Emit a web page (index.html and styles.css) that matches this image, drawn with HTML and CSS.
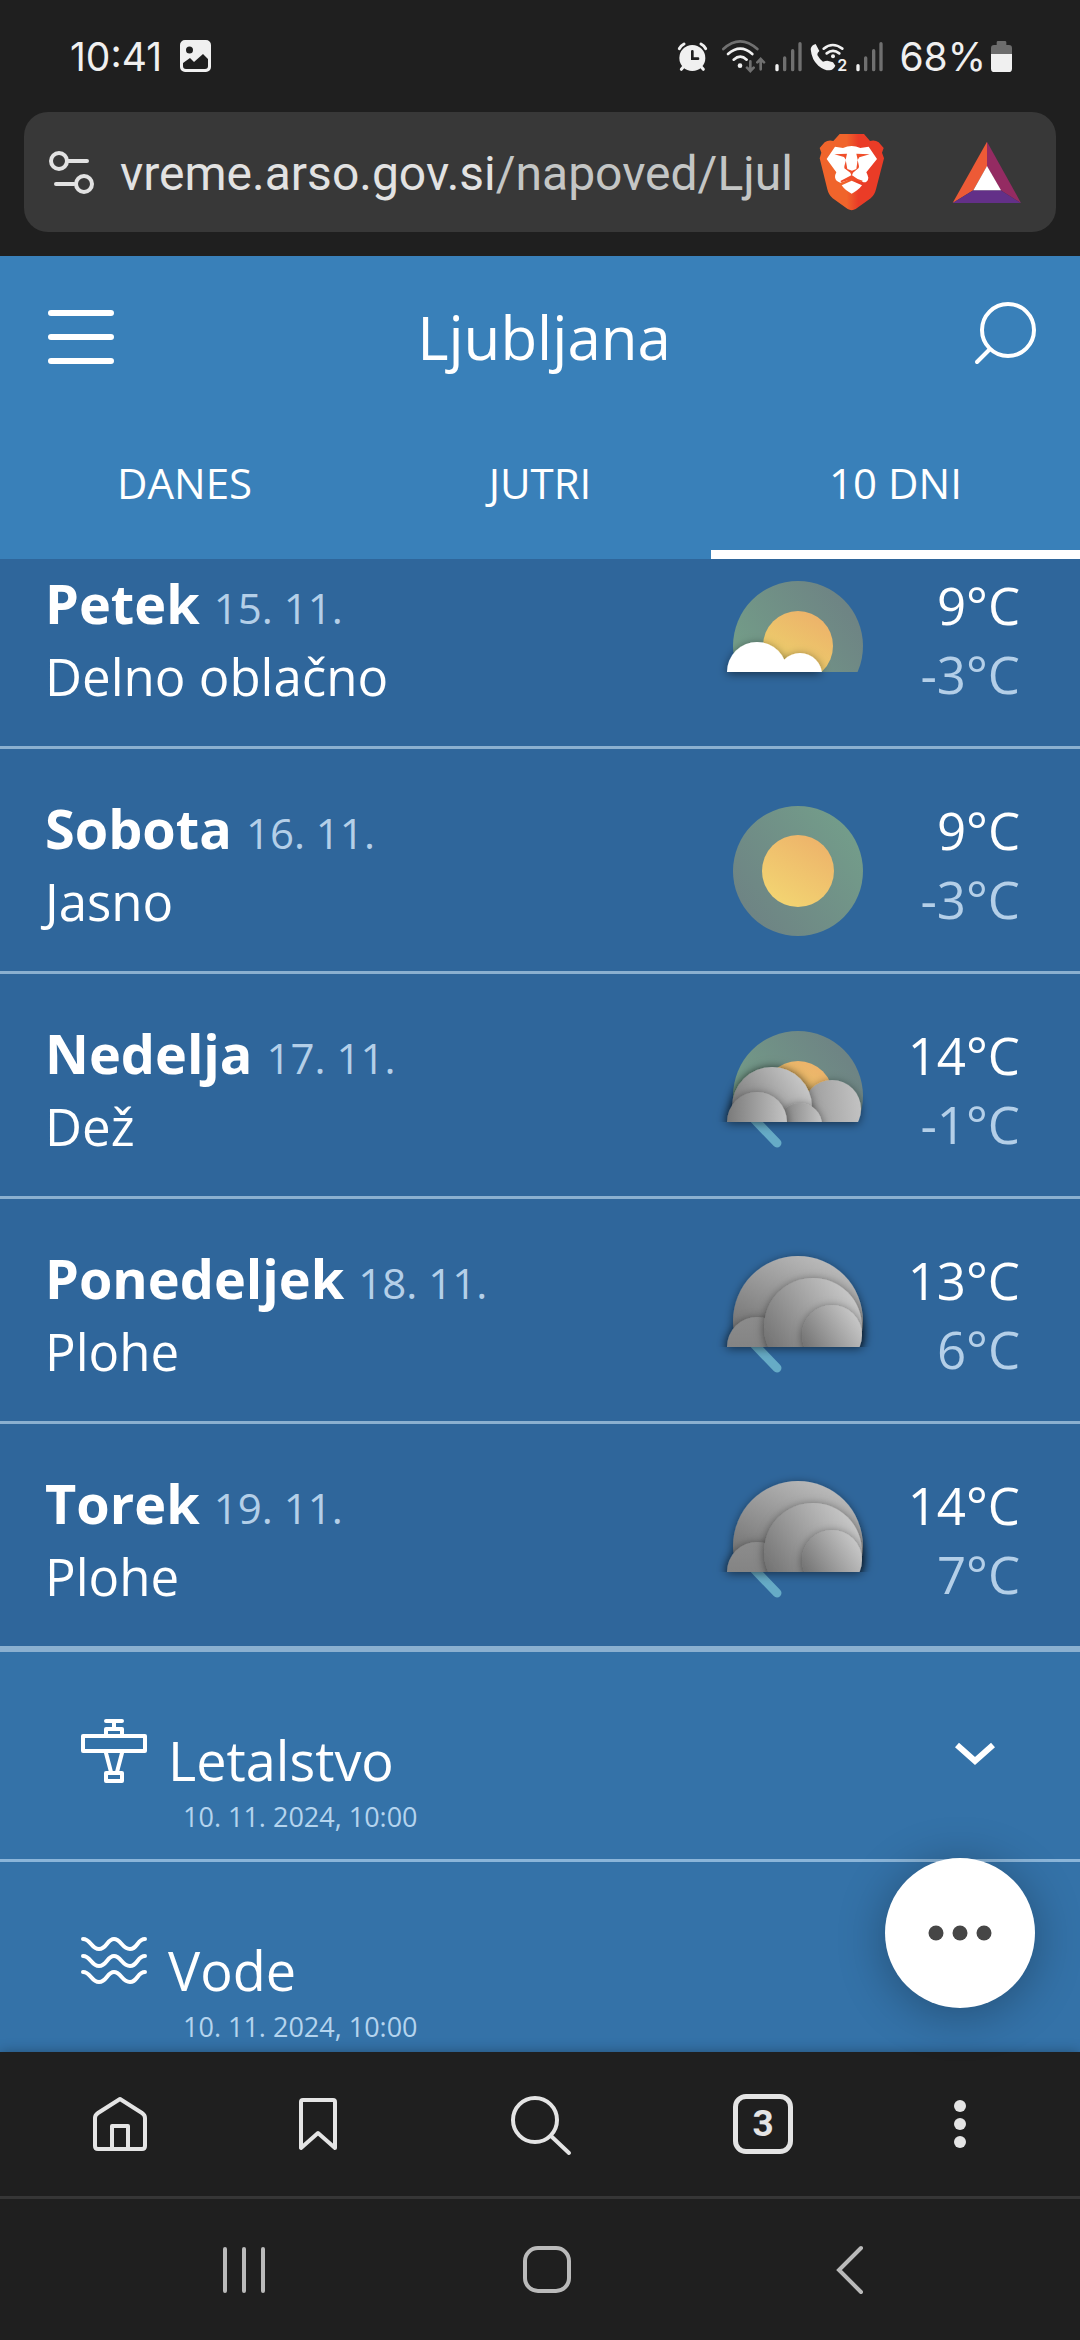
FILE: index.html
```html
<!DOCTYPE html>
<html lang="sl">
<head>
<meta charset="utf-8">
<meta name="viewport" content="width=device-width">
<title>Ljubljana</title>
<link rel="stylesheet" href="styles.css">
</head>
<body>
<svg class="defs" aria-hidden="true">
  <defs>
    <linearGradient id="sun" x1="0.2" y1="1" x2="0.8" y2="0"><stop offset="0" stop-color="#f3d672"/><stop offset="1" stop-color="#edb26a"/></linearGradient>
    <linearGradient id="sunLow" x1="0.3" y1="0.7" x2="0.7" y2="0"><stop offset="0" stop-color="#eccd6b"/><stop offset="1" stop-color="#edb26a"/></linearGradient>
    <linearGradient id="halo" x1="0.1" y1="0.8" x2="0.9" y2="0.2"><stop offset="0" stop-color="#6e8484"/><stop offset="1" stop-color="#739c8a"/></linearGradient>
    <linearGradient id="haloLow" x1="0.1" y1="0.6" x2="0.8" y2="0.1"><stop offset="0" stop-color="#739c88"/><stop offset="1" stop-color="#6e8484"/></linearGradient>
    <linearGradient id="cloud" x1="0" y1="0.8" x2="0.9" y2="0.2"><stop offset="0" stop-color="#6c6c6c"/><stop offset="1" stop-color="#c6c6c6"/></linearGradient>
    <linearGradient id="cloudBack" x1="0.2" y1="0.8" x2="0.6" y2="0"><stop offset="0" stop-color="#686868"/><stop offset="1" stop-color="#b8b8b8"/></linearGradient>
    <linearGradient id="cloudSide" x1="0" y1="0.6" x2="1" y2="0.5"><stop offset="0" stop-color="#989898"/><stop offset="1" stop-color="#c2c2c2"/></linearGradient>
    <linearGradient id="cloudFront" x1="0" y1="0" x2="1" y2="0"><stop offset="0" stop-color="#7a7a7a"/><stop offset="1" stop-color="#c4c4c4"/></linearGradient>
    <linearGradient id="cloudDark" x1="0" y1="0" x2="0" y2="1"><stop offset="0" stop-color="#8c8c8c"/><stop offset="1" stop-color="#7c7c7c"/></linearGradient>
    <linearGradient id="brave" x1="0" y1="0" x2="1" y2="0"><stop offset="0.42" stop-color="#f0642b"/><stop offset="0.6" stop-color="#ea3c27"/></linearGradient>
    <clipPath id="sky"><rect x="-20" y="-20" width="190" height="121"/></clipPath>
    <filter id="shade" x="-30%" y="-30%" width="160%" height="160%"><feDropShadow dx="0" dy="2" stdDeviation="5" flood-color="#000" flood-opacity="0.5"/></filter>
    <symbol id="heavy" viewBox="0 0 152 150" overflow="visible">
      <path d="M33 97 57 122" stroke="#66abc6" stroke-width="9" stroke-linecap="round"/>
      <g filter="url(#shade)"><g clip-path="url(#sky)">
        <circle cx="78" cy="75" r="65" fill="url(#cloudBack)"/>
        <g filter="url(#shade)"><circle cx="37" cy="101" r="30" fill="url(#cloudDark)"/></g>
        <g filter="url(#shade)"><circle cx="93" cy="81" r="49" fill="url(#cloud)"/></g>
        <g filter="url(#shade)"><circle cx="112" cy="89" r="30" fill="url(#cloud)"/></g>
      </g></g>
    </symbol>
  </defs>
</svg>

<div class="statusbar">
  <div class="status-left">
    <span class="clock">10:41</span>
    <svg width="31" height="32" viewBox="0 0 31 32"><path fill="#f0f0f0" fill-rule="evenodd" d="M5 0h21a5 5 0 0 1 5 5v22a5 5 0 0 1-5 5H5a5 5 0 0 1-5-5V5a5 5 0 0 1 5-5ZM9.500 6.500a3.500 3.500 0 1 0 0 7a3.500 3.500 0 0 0 0-7ZM3 23v3q0 3 3 3h19q3 0 3-3v-7l-5-5-9 8-4-4Z"/></svg>
  </div>
  <div class="status-right">
    <svg width="37" height="35" viewBox="108 117 111 105" fill="#f0f0f0"><circle cx="157" cy="174" r="39"/><path d="M118 146q4-9 14-14M197 146q-4-9-14-14M124 208l12-14M190 208l-12-14" stroke="#f0f0f0" stroke-width="9" stroke-linecap="round" fill="none"/><path d="M157 154v22h17" fill="none" stroke="#1f1f1f" stroke-width="8" stroke-linecap="round"/></svg>
    <svg width="47" height="35" viewBox="240 117 141 105" fill="none" stroke-width="8" stroke-linecap="round"><path d="M250 147q50-46 102 0M331 184v28M321 203l10 10 10-10M362 208v-28M352 187l10-10 10 10" stroke="#707070"/><path d="M264 162q37-32 73 0M281 179q20-18 39 0" stroke="#f0f0f0"/><circle cx="300" cy="197" r="7" fill="#f0f0f0"/></svg>
    <svg width="29" height="35" viewBox="402 117 87 105" fill="none" stroke-width="10" stroke-linecap="round"><path d="M411 197v12" stroke="#f0f0f0"/><path d="M434 174v35M458 152v57M480 131v78" stroke="#707070"/></svg>
    <svg width="38" height="35" viewBox="513 117 114 105"><path fill="#f0f0f0" d="M515 147q2-12 15-15l11 21q-7 6-6 12 7 13 17 20 8-3 13-3l17 5 7 10q-5 12-18 14-16 0-33-14-20-17-23-50Z"/><path d="M554 146q27-22 56 0M563 160q19-15 38 0" fill="none" stroke="#f0f0f0" stroke-width="8" stroke-linecap="round"/><circle cx="582" cy="169" r="6" fill="#f0f0f0"/><text x="595" y="212" class="sim">2</text></svg>
    <svg width="29" height="35" viewBox="402 117 87 105" fill="none" stroke-width="10" stroke-linecap="round"><path d="M411 197v12" stroke="#f0f0f0"/><path d="M434 174v35M458 152v57M480 131v78" stroke="#707070"/></svg>
    <div class="battery"><span>68%</span>
    <svg width="23" height="35" viewBox="1047 117 69 105"><path fill="#6c6c6c" d="M1050 164v-20q0-9 9-9h8v-8q0-4 4-4h21q4 0 4 4v8h8q9 0 9 9v20Z"/><path fill="#f0f0f0" d="M1050 162h63v44q0 10-10 10h-43q-10 0-10-10Z"/></svg></div>
  </div>
</div>

<div class="urlbar">
  <button class="plain" aria-label="Site settings"><svg width="48" height="44" viewBox="0 0 48 44" fill="none" stroke="#e2e2e2" stroke-width="4" stroke-linecap="round"><circle cx="11" cy="11" r="8"/><path d="M20 11h19M8 34h18"/><circle cx="36" cy="34" r="8"/></svg></button>
  <button class="plain url"><span class="host">vreme.arso.gov.si</span>/napoved/Ljul</button>
  <button class="plain shield" aria-label="Brave Shields"><svg width="66" height="78" viewBox="534 399 198 234"><path fill="url(#brave)" d="M596 402h73l18 21q15-4 26 4l15 17-5 14 6 17-24 93q-4 17-16 27l-45 32q-12 7-24 0l-45-32q-12-10-16-27l-23-93 5-17-5-14 15-17q11-8 26-4Z"/><path fill="#fff" d="M582 440l24 4q26-12 52 0l25-4 25 37-32 40q4 8 6 16-1 14-14 14-18-4-33-18-14 14-37 19-14-3-16-16 0-8 4-15l-29-40Z"/><path fill="#f04e2a" d="M580 463l38-2-4 18 5 28 14 5 13-5 4-28-4-18 40 2-31 9-5 8 4 19-1 5-17 14-3 8q14 12 32 16l-2 5-31-10-31 10-3-4 33-17-3-8-18-13v-6l5-19-6-9Z"/><path fill="#fff" d="M602 556l30-14 31 14q-10 14-31 25-20-10-30-25Z"/></svg></button>
  <button class="plain" aria-label="Brave Rewards"><svg width="70" height="63" viewBox="933 420 210 189"><path fill="#ed5a36" d="M1038 422v74l-41 72-62 38Z"/><path fill="#942b62" d="M1038 422l102 184-61-38-41-72Z"/><path fill="#633088" d="M935 606l62-38h82l61 38Z"/><path fill="#fff" d="M1038 495l42 73h-83Z"/></svg></button>
</div>

<header class="header">
  <div class="topbar">
    <button class="plain" aria-label="Meni"><svg width="68" height="54" viewBox="0 0 68 54" stroke="#fff" stroke-width="6" stroke-linecap="round"><path d="M4 3h60M4 27h60M4 51h60"/></svg></button>
    <h1 class="title">Ljubljana</h1>
    <button class="plain search" aria-label="Iskanje"><svg width="64" height="64" viewBox="0 0 64 64" fill="none" stroke="#fff" stroke-width="4" stroke-linecap="round"><circle cx="35" cy="28" r="26"/><path d="M16 48 4 60"/></svg></button>
  </div>
  <nav class="tabs">
    <a class="tab" href="#danes">DANES</a>
    <a class="tab" href="#jutri">JUTRI</a>
    <a class="tab active" href="#deset">10 DNI</a>
  </nav>
</header>

<main class="content">
  <ul class="days">
    <li class="day">
      <div class="info"><p class="name"><b>Petek</b> <span class="date">15. 11.</span></p><p class="sky">Delno oblačno</p></div>
      <svg class="icon" width="152" height="150" viewBox="0 0 152 150"><g clip-path="url(#sky)"><circle cx="78" cy="75" r="65" fill="url(#haloLow)"/><circle cx="78" cy="75" r="35" fill="url(#sunLow)"/></g><g filter="url(#shade)"><g clip-path="url(#sky)" fill="#fff"><circle cx="80" cy="104" r="22"/><circle cx="37" cy="101" r="30"/></g></g></svg>
      <div class="temps"><p>9°C</p><p class="low">-3°C</p></div>
    </li>
    <li class="day">
      <div class="info"><p class="name"><b>Sobota</b> <span class="date">16. 11.</span></p><p class="sky">Jasno</p></div>
      <svg class="icon" width="152" height="150" viewBox="0 0 152 150"><circle cx="78" cy="75" r="65" fill="url(#halo)"/><circle cx="78" cy="75" r="36" fill="url(#sun)"/></svg>
      <div class="temps"><p>9°C</p><p class="low">-3°C</p></div>
    </li>
    <li class="day">
      <div class="info"><p class="name"><b>Nedelja</b> <span class="date">17. 11.</span></p><p class="sky">Dež</p></div>
      <svg class="icon" width="152" height="150" viewBox="0 0 152 150"><path d="M33 97 57 122" stroke="#66abc6" stroke-width="9" stroke-linecap="round"/><g clip-path="url(#sky)"><circle cx="78" cy="75" r="65" fill="url(#haloLow)"/><circle cx="78" cy="75" r="35" fill="url(#sunLow)"/></g><g filter="url(#shade)"><g clip-path="url(#sky)"><circle cx="112" cy="88" r="29" fill="url(#cloudSide)"/><g filter="url(#shade)"><circle cx="52" cy="86" r="40" fill="url(#cloud)"/></g><g filter="url(#shade)"><circle cx="80" cy="104" r="22" fill="url(#cloudFront)"/></g><circle cx="37" cy="101" r="30" fill="url(#cloudFront)" filter="url(#shade)"/></g></g></svg>
      <div class="temps"><p>14°C</p><p class="low">-1°C</p></div>
    </li>
    <li class="day">
      <div class="info"><p class="name"><b>Ponedeljek</b> <span class="date">18. 11.</span></p><p class="sky">Plohe</p></div>
      <svg class="icon" width="152" height="150"><use href="#heavy" width="152" height="150"/></svg>
      <div class="temps"><p>13°C</p><p class="low">6°C</p></div>
    </li>
    <li class="day">
      <div class="info"><p class="name"><b>Torek</b> <span class="date">19. 11.</span></p><p class="sky">Plohe</p></div>
      <svg class="icon" width="152" height="150"><use href="#heavy" width="152" height="150"/></svg>
      <div class="temps"><p>14°C</p><p class="low">7°C</p></div>
    </li>
  </ul>

  <section class="panel">
    <svg width="66" height="66" viewBox="0 0 66 66" fill="none" stroke="#fff" stroke-width="4" stroke-linejoin="round" stroke-linecap="round"><path d="M25 3h16M33 4v6M25 17v-6h16v6M2 18h62v15H2ZM25 35l5 19M41 35l-5 19M25 55h16v8H25Z"/></svg>
    <div class="panel-text"><h2 class="panel-title">Letalstvo</h2><p class="stamp">10. 11. 2024, 10:00</p></div>
    <button class="plain chevron" aria-label="Odpri"><svg width="42" height="24" viewBox="0 0 42 24" fill="none" stroke="#fff" stroke-width="6"><path d="M3 3l18 16L39 3"/></svg></button>
  </section>
  <section class="panel">
    <svg width="66" height="66" viewBox="0 0 66 66" fill="none" stroke="#fff" stroke-width="4" stroke-linecap="round"><path d="M2 11C10 11 10 21 18 21S26 11 33 11 41 21 49 21 56 11 64 11M2 28C10 28 10 38 18 38S26 28 33 28 41 38 49 38 56 28 64 28M2 44C10 44 10 54 18 54S26 44 33 44 41 54 49 54 56 44 64 44"/></svg>
    <div class="panel-text"><h2 class="panel-title">Vode</h2><p class="stamp">10. 11. 2024, 10:00</p></div>
  </section>
</main>

<footer class="bottom">
  <button class="fab" aria-label="Več"><svg width="64" height="16" viewBox="0 0 64 16" fill="#464646"><circle cx="8" cy="8" r="7.500"/><circle cx="32" cy="8" r="7.500"/><circle cx="56" cy="8" r="7.500"/></svg></button>
  <nav class="toolbar">
    <button class="plain" aria-label="Home"><svg width="60" height="60" viewBox="0 0 60 60" fill="none" stroke="#e4e4e4" stroke-width="4" stroke-linejoin="round"><path d="M30 5 52 19q3 2 3 5v28q0 3-3 3H8q-3 0-3-3V24q0-3 3-5ZM22 55V32h16v23"/></svg></button>
    <button class="plain" aria-label="Bookmark"><svg width="60" height="60" viewBox="0 0 60 60" fill="none" stroke="#e4e4e4" stroke-width="4" stroke-linejoin="round"><path d="M15 6h30q2 0 2 2v46L30 39 13 54V8q0-2 2-2Z"/></svg></button>
    <button class="plain" aria-label="Search"><svg width="64" height="64" viewBox="0 0 64 64" fill="none" stroke="#e4e4e4" stroke-width="4" stroke-linecap="round"><circle cx="26" cy="28" r="22"/><path d="M42 44 60 61"/></svg></button>
    <button class="plain" aria-label="Tabs"><span class="count">3</span></button>
    <button class="plain" aria-label="Menu"><svg width="60" height="60" viewBox="0 0 60 60" fill="#e4e4e4"><circle cx="30" cy="12" r="6"/><circle cx="30" cy="30" r="6"/><circle cx="30" cy="48" r="6"/></svg></button>
  </nav>
  <nav class="sysnav">
    <button class="plain" aria-label="Recents"><svg width="50" height="50" viewBox="0 0 50 50" stroke="#bababa" stroke-width="4" stroke-linecap="round"><path d="M6 4v42M25 4v42M44 4v42"/></svg></button>
    <button class="plain" aria-label="System home"><svg width="50" height="50" viewBox="0 0 50 50" fill="none" stroke="#bababa" stroke-width="4"><rect x="3" y="3" width="44" height="43" rx="13"/></svg></button>
    <button class="plain" aria-label="Back"><svg width="50" height="50" viewBox="0 0 50 50" fill="none" stroke="#bababa" stroke-width="4" stroke-linecap="round"><path d="M36 3 14 25 36 47"/></svg></button>
  </nav>
</footer>
</body>
</html>
```

FILE: styles.css
```css
* {
  box-sizing: border-box;
  margin: 0;
  padding: 0;
}

body {
  display: flex;
  flex-direction: column;
  height: 100vh;
  overflow: hidden;
  background: #1f1f1f;
  color: #fff;
  font-family: "Open Sans", "Noto Sans", sans-serif;
}

svg {
  display: block;
  flex: none;
}

.defs {
  position: absolute;
  width: 0;
  height: 0;
}

.plain {
  display: flex;
  align-items: center;
  justify-content: center;
  background: none;
  border: 0;
  color: inherit;
  font: inherit;
}

.statusbar {
  display: flex;
  flex: none;
  justify-content: space-between;
  align-items: center;
  height: 112px;
  padding: 0 67px 0 70px;
  color: #f0f0f0;
  font-family: Inter, sans-serif;
  font-size: 39px;
}

.status-left {
  display: flex;
  align-items: center;
  gap: 18px;
}

.status-right {
  display: flex;
  align-items: center;
  gap: 7px;
}

.battery {
  display: flex;
  align-items: center;
  gap: 4px;
  margin-left: 8px;
}

.sim {
  font-family: Inter, sans-serif;
  font-size: 48px;
  font-weight: 600;
  fill: #f0f0f0;
}

.urlbar {
  display: flex;
  flex: none;
  align-items: center;
  height: 120px;
  margin: 0 24px 24px;
  padding: 0 34px 0 24px;
  border-radius: 24px;
  background: #383838;
}

.url {
  display: block;
  flex: 1;
  min-width: 0;
  padding-top: 2px;
  padding-left: 24px;
  overflow: hidden;
  color: #c4c6c5;
  font-family: Roboto, sans-serif;
  font-size: 48px;
  text-align: left;
  white-space: nowrap;
}

.host {
  color: #e2e2e2;
}

.shield {
  margin: 0 67px 0 24px;
}

.header {
  flex: none;
  background: #3980b9;
}

.topbar {
  display: grid;
  grid-template-columns: 68px 1fr 64px;
  align-items: center;
  height: 162px;
  padding: 0 43px 0 47px;
}

.title {
  font-size: 60px;
  font-weight: 400;
  line-height: 80px;
  text-align: center;
}

.search {
  padding-bottom: 6px;
}

.tabs {
  display: grid;
  grid-template-columns: 41fr 38fr 41fr;
}

.tab {
  height: 141px;
  padding-top: 35px;
  border-bottom: 9px solid transparent;
  color: inherit;
  font-size: 42px;
  line-height: 60px;
  text-align: center;
  text-decoration: none;
}

.active {
  border-color: #fff;
}

.content {
  flex: 1;
  min-height: 0;
  overflow: hidden;
  background: #3472a8;
}

.days {
  margin-top: -35px;
  border-bottom: 3px solid #8bb0d0;
  background: #2f669b;
  list-style: none;
}

.day {
  display: grid;
  grid-template-columns: 1fr 152px 148px;
  align-items: start;
  padding: 43px 60px 25px 45px;
  border-bottom: 3px solid #8bb0d0;
}

.icon {
  margin-top: 4px;
  overflow: visible;
}

.name {
  font-size: 54px;
  line-height: 72px;
}

.date {
  color: #b4cfe8;
  font-size: 42px;
  line-height: 42px;
}

.sky {
  font-size: 51px;
  line-height: 74px;
}

.temps {
  padding-top: 4px;
  font-size: 51px;
  line-height: 69px;
  text-align: right;
}

.low {
  color: #b4cfe8;
}

.panel {
  display: flex;
  align-items: flex-start;
  height: 210px;
  padding: 66px 84px 0 81px;
  border-bottom: 3px solid #8bb5d9;
}

.panel-text {
  flex: 1;
  padding-left: 21px;
}

.panel-title {
  font-size: 54px;
  font-weight: 400;
  line-height: 84px;
}

.stamp {
  padding-left: 15px;
  color: #b4d4ee;
  font-size: 27px;
  line-height: 30px;
}

.chevron {
  padding-top: 24px;
}

.bottom {
  position: relative;
  flex: none;
  background: #1f1f1f;
  box-shadow: 0 0 12px rgba(0, 0, 0, 0.3);
}

.fab {
  position: absolute;
  right: 45px;
  bottom: calc(100% + 44px);
  display: flex;
  align-items: center;
  justify-content: center;
  width: 150px;
  height: 150px;
  border: 0;
  border-radius: 50%;
  background: #fff;
  box-shadow: 0 6px 48px rgba(0, 0, 0, 0.3);
}

.toolbar {
  display: grid;
  grid-template-columns: 198fr 198fr 248fr 196fr 198fr;
  height: 147px;
  padding: 0 21px;
  border-bottom: 3px solid #363636;
}

.count {
  width: 60px;
  height: 60px;
  border: 5px solid #e4e4e4;
  border-radius: 13px;
  color: #e4e4e4;
  font-family: Roboto, sans-serif;
  font-size: 37px;
  font-weight: 700;
  line-height: 50px;
}

.sysnav {
  display: grid;
  grid-template-columns: repeat(3, 1fr);
  height: 141px;
  padding: 0 79px 0 93px;
}
```
